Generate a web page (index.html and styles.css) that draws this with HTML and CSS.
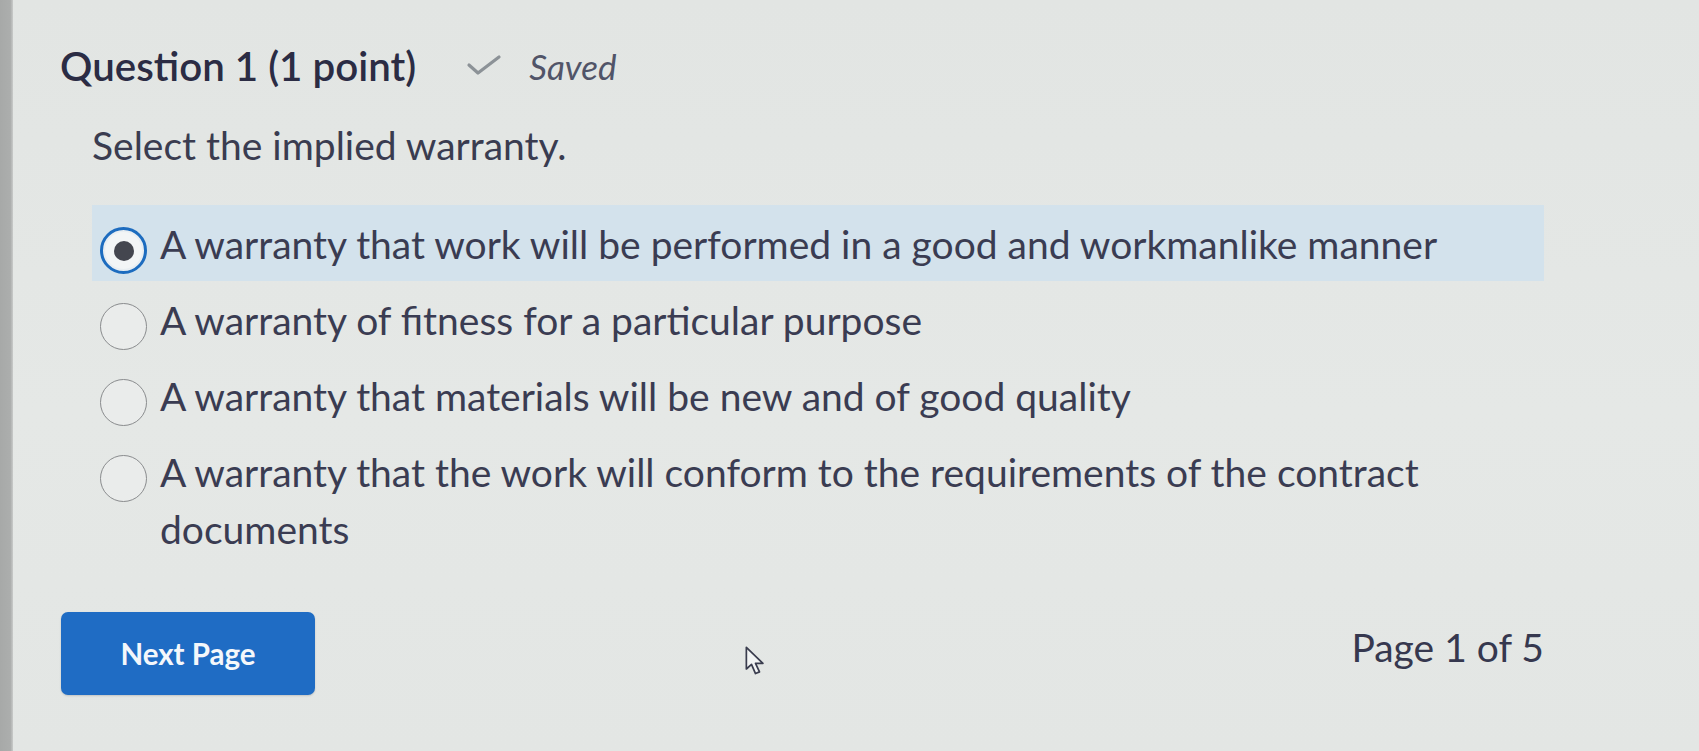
FILE: index.html
```html
<!DOCTYPE html>
<html lang="en">
<head>
<meta charset="utf-8">
<title>Question 1</title>
<link rel="stylesheet" href="styles.css">
</head>
<body>
<div class="screen">
  <div class="edge"></div>
  <main class="quiz">
    <header class="q-head">
      <h1 class="q-title">Question 1 (1 point)</h1>
      <span class="saved">
        <svg class="check" viewBox="0 0 36 22" width="36" height="22" aria-hidden="true">
          <path d="M3 11 L12 19 L33 3" fill="none" stroke="#8c9297" stroke-width="3.2" stroke-linecap="round" stroke-linejoin="round"/>
        </svg>
        <em class="saved-text">Saved</em>
      </span>
    </header>
    <p class="prompt">Select the implied warranty.</p>
    <ul class="options">
      <li class="opt selected"><span class="radio"><span class="dot"></span></span><span class="label">A warranty that work will be performed in a good and workmanlike manner</span></li>
      <li class="opt"><span class="radio"></span><span class="label">A warranty of fitness for a particular purpose</span></li>
      <li class="opt"><span class="radio"></span><span class="label">A warranty that materials will be new and of good quality</span></li>
      <li class="opt"><span class="radio"></span><span class="label">A warranty that the work will conform to the requirements of the contract documents</span></li>
    </ul>
    <footer class="nav">
      <button class="next" type="button">Next Page</button>
      <span class="pager">Page 1 of 5</span>
    </footer>
  </main>
  <svg class="cursor" viewBox="0 0 20 28" width="23" height="32" aria-hidden="true">
    <path d="M2 2 L2 21 L6.5 17 L10 25 L13.5 23.5 L10 16 L16.5 16 Z" fill="#f2f4f4" stroke="#3a3d4e" stroke-width="1.5" stroke-linejoin="round"/>
  </svg>
</div>
</body>
</html>
```
FILE: styles.css
```css
* { box-sizing: border-box; }
html, body { margin: 0; padding: 0; }
body {
  background: #e3e6e4;
  font-family: Lato, "Open Sans", "Liberation Sans", sans-serif;
  color: #393b52;
  overflow: hidden;
}
.screen {
  position: relative;
  display: flex;
  width: 1699px;
  height: 751px;
  background: linear-gradient(180deg, #e2e5e3 0%, #e5e8e6 55%, #e3e6e4 100%);
}
.edge {
  width: 13px;
  flex: none;
  background: linear-gradient(90deg, #a7a9a8 0%, #acaead 80%, #c9cbca 100%);
}
.quiz {
  flex: 1;
  padding: 42px 155px 0 47px;
}
.q-head {
  display: flex;
  align-items: center;
  height: 48px;
}
.q-title {
  margin: 0;
  font-size: 40.3px;
  font-weight: 600;
  line-height: 48px;
  color: #2b2c44;
}
.saved {
  display: flex;
  align-items: center;
  margin-left: 50px;
}
.check { margin-right: 27px; margin-top: -2px; }
.saved-text {
  font-size: 35px;
  font-style: italic;
  color: #515468;
  line-height: 48px;
}
.prompt {
  margin: 31px 0 0 32px;
  font-size: 39px;
  line-height: 48px;
  color: #3a3c50;
}
.options {
  list-style: none;
  margin: 36px 0 0 32px;
  padding: 0;
}
.opt {
  display: flex;
  align-items: flex-start;
  padding: 11px 0 8px 8px;
}
.opt.selected { background: #d3e2ec; }
.radio {
  flex: none;
  width: 47px;
  height: 47px;
  margin: 11px 0 -2px;
  border-radius: 50%;
  border: 1.5px solid #8a8c8e;
  background: #eaeceb;
  display: flex;
  align-items: center;
  justify-content: center;
}
.selected .radio {
  border: 3px solid #1d6cbf;
  background: #f3f5f6;
  box-shadow: inset 0 0 0 2px #e9eef2;
}
.dot {
  width: 20px;
  height: 20px;
  border-radius: 50%;
  background: #44464f;
}
.label {
  margin-left: 13px;
  font-size: 39px;
  line-height: 57px;
  color: #3a3c52;
  max-width: 1384px;
}
.nav {
  display: flex;
  justify-content: space-between;
  align-items: flex-start;
  margin-top: 46px;
}
.next {
  width: 254px;
  height: 83px;
  margin-left: 1px;
  border: none;
  border-radius: 7px;
  background: #1f6cc4;
  color: #f4f7fb;
  font-family: Lato, "Open Sans", "Liberation Sans", sans-serif;
  font-size: 29.5px;
  font-weight: 700;
  box-shadow: 0 1px 2px rgba(0,0,0,0.15);
}
.pager {
  padding-top: 11px;
  font-size: 39px;
  line-height: 48px;
  color: #36384f;
}
.cursor {
  position: absolute;
  left: 744px;
  top: 645px;
}
```
